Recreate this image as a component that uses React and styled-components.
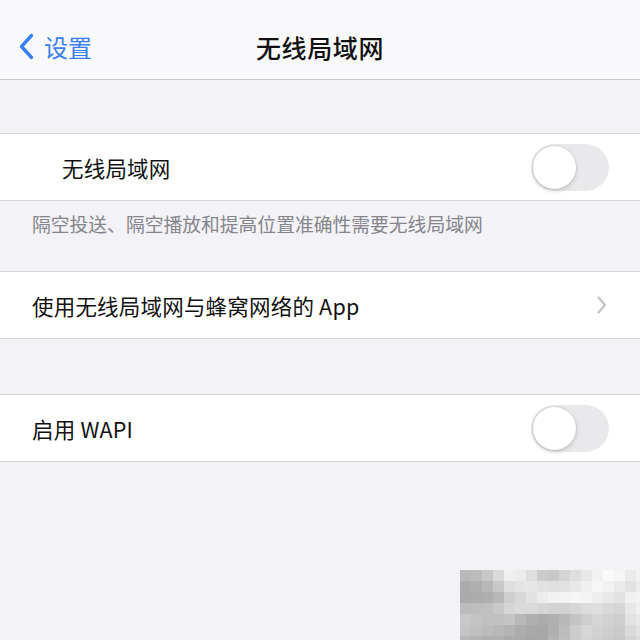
import React from 'react';
import styled, { createGlobalStyle } from 'styled-components';

const GlobalStyle = createGlobalStyle`
  html, body {
    margin: 0;
    padding: 0;
    background: #f2f2f7;
  }
  body {
    font-family: "Noto Sans CJK SC", "Noto Sans", "Liberation Sans", sans-serif;
    -webkit-font-smoothing: antialiased;
  }
`;

const Screen = styled.div`
  position: relative;
  width: 640px;
  height: 640px;
  overflow: hidden;
  background: #f2f2f7;
`;

const NavBar = styled.header`
  height: 80px;
  display: grid;
  grid-template-columns: 1fr auto 1fr;
  align-items: center;
  background: #f9f9fb;
  border-bottom: 1px solid #c9c9cd;
  box-sizing: border-box;
  padding-top: 14px;
`;

const BackButton = styled.div`
  display: flex;
  align-items: center;
  gap: 10px;
  padding-left: 19px;
  color: #3a80f5;
  font-size: 24px;
  line-height: 1;
`;

const Title = styled.h1`
  margin: 0;
  font-size: 25px;
  font-weight: 500;
  color: #111;
  letter-spacing: 0.6px;
`;

const Spacer = styled.div`
  height: ${(p) => p.$h}px;
`;

const Group = styled.section`
  background: #fff;
  border-top: 1px solid #d6d6da;
  border-bottom: 1px solid #d6d6da;
`;

const Row = styled.div`
  height: 66px;
  display: flex;
  align-items: center;
  justify-content: space-between;
  padding-left: ${(p) => p.$indent || 32}px;
  padding-right: ${(p) => p.$trail || 31}px;
`;

const Label = styled.span`
  font-size: 21.5px;
  color: #111;
  letter-spacing: 0.2px;
`;

const Footnote = styled.p`
  margin: 0;
  padding: 9px 32px 0;
  height: 70px;
  box-sizing: border-box;
  font-size: 18.8px;
  color: #85858a;
  line-height: 28px;
`;

const Track = styled.div`
  position: relative;
  width: 78px;
  height: 47px;
  border-radius: 24px;
  background: #e9e9eb;
  box-sizing: border-box;
`;

const Knob = styled.div`
  position: absolute;
  top: 2px;
  left: 2px;
  width: 43px;
  height: 43px;
  border-radius: 50%;
  background: #fff;
  box-shadow: 0 2px 5px rgba(0, 0, 0, 0.16), 0 0 0 1px rgba(0, 0, 0, 0.05);
`;

const Mosaic = styled.div`
  position: absolute;
  left: 460px;
  top: 570px;
  display: grid;
  grid-template-columns: repeat(17, 11px);
  grid-auto-rows: 11px;
`;

const Tile = styled.div`
  background: ${(p) => p.$c};
`;

const mosaicRows = [
  'b8bcc8daf0ecdeccc8d4dee8f2faf6eaf2',
  'acb0b8c8dee4e6e2e0e2e8f0f6f2eae2ec',
  'aaacaeb8ced8e2ecf2f4f6f4eee8e2f0f4',
  'bcbec0c8d6dadad6d2d2d6dcded8d6e8f0',
  'c8c4c0c0c4b8b0acb0b8c4ced6d2cee2e8',
  'c4c0bcb8b4acaaa8b0bcccd6d2cecadae2',
  'b8b4b0b0acaaa6a8b4c0ccd4d0ccc8d4da',
];

function Toggle() {
  return (
    <Track>
      <Knob />
    </Track>
  );
}

function BackChevron() {
  return (
    <svg width="15" height="27" viewBox="0 0 15 27">
      <path d="M12.5 2.5 L2.5 13.5 L12.5 24.5" fill="none" stroke="#3a80f5" strokeWidth="3.4" strokeLinecap="round" strokeLinejoin="round" />
    </svg>
  );
}

function Disclosure() {
  return (
    <svg width="10" height="18" viewBox="0 0 10 18">
      <path d="M1.5 1.5 L8 9 L1.5 16.5" fill="none" stroke="#c3c3c8" strokeWidth="2.2" strokeLinecap="round" strokeLinejoin="round" />
    </svg>
  );
}

export default function App() {
  return (
    <>
      <GlobalStyle />
      <Screen>
        <NavBar>
          <BackButton>
            <BackChevron />
            <span>设置</span>
          </BackButton>
          <Title>无线局域网</Title>
          <div />
        </NavBar>

        <Spacer $h={53} />
        <Group>
          <Row $indent={62}>
            <Label>无线局域网</Label>
            <Toggle />
          </Row>
        </Group>
        <Footnote>隔空投送、隔空播放和提高位置准确性需要无线局域网</Footnote>

        <Group>
          <Row $trail={33}>
            <Label>使用无线局域网与蜂窝网络的 App</Label>
            <Disclosure />
          </Row>
        </Group>

        <Spacer $h={55} />
        <Group>
          <Row>
            <Label>启用 WAPI</Label>
            <Toggle />
          </Row>
        </Group>

        <Mosaic>
          {mosaicRows.flatMap((row, r) =>
            row.match(/../g).map((v, c) => <Tile key={`${r}-${c}`} $c={`#${v}${v}${v}`} />)
          )}
        </Mosaic>
      </Screen>
    </>
  );
}
